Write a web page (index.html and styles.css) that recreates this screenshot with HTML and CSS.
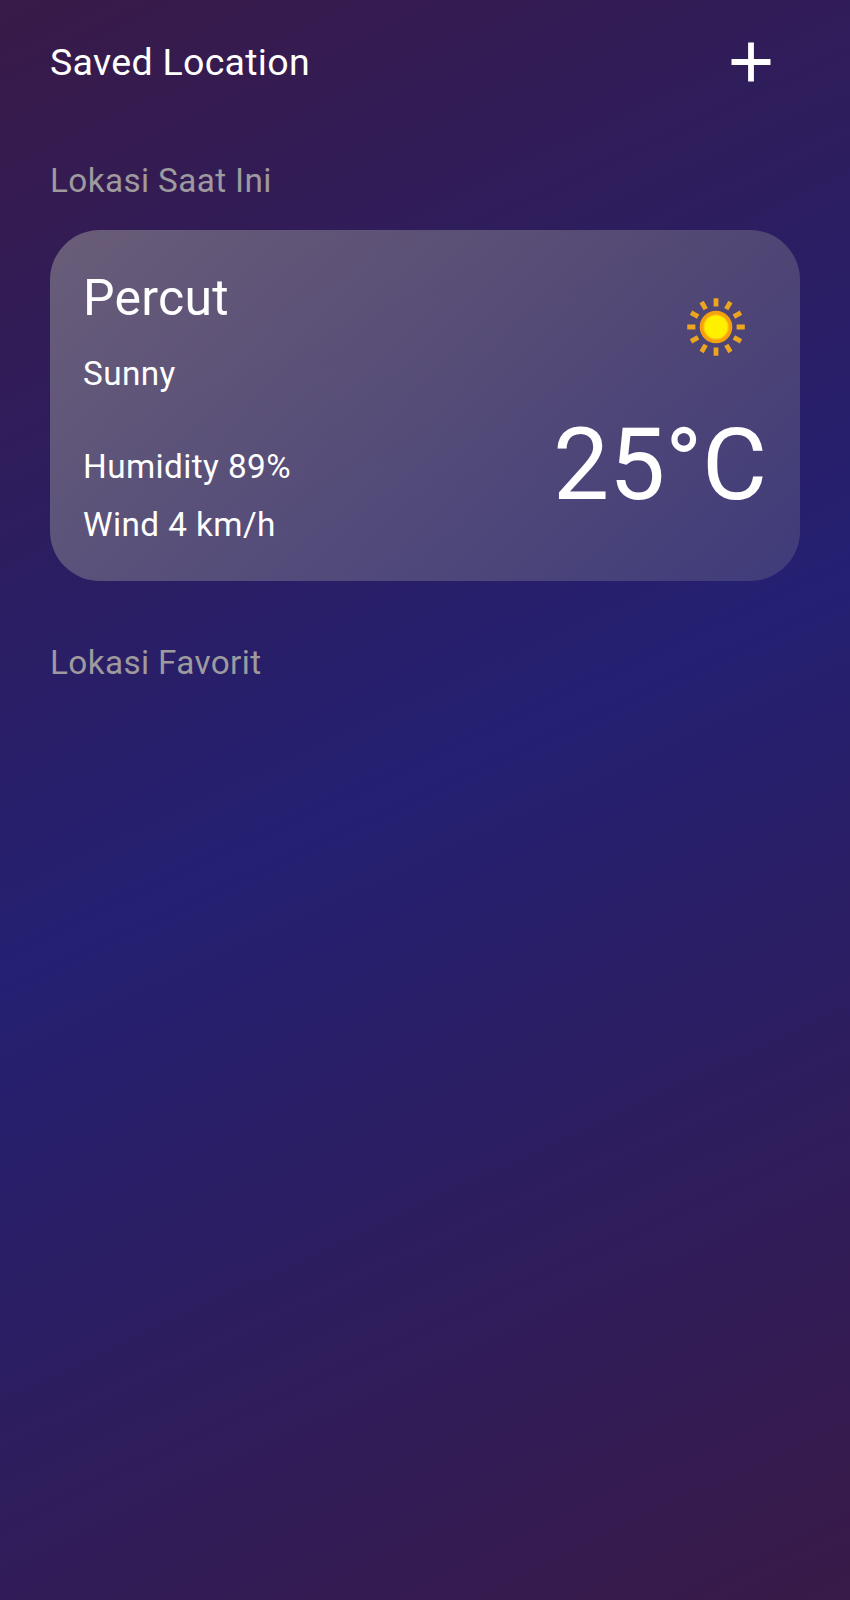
FILE: index.html
```html
<!DOCTYPE html>
<html lang="id">
<head>
<meta charset="utf-8">
<title>Saved Location</title>
<link rel="stylesheet" href="styles.css">
</head>
<body>
<main class="screen">
  <header class="header">
    <h1 class="title">Saved Location</h1>
    <svg class="add" viewBox="0 0 40 40" aria-label="Add"><path d="M20 .5V39.5M.5 20H39.5" stroke="#fff" stroke-width="5.8"/></svg>
  </header>
  <h2 class="section current">Lokasi Saat Ini</h2>
  <section class="card">
    <div class="details">
      <div class="city">Percut</div>
      <div class="condition">Sunny</div>
      <div class="humidity">Humidity 89%</div>
      <div class="wind">Wind 4 km/h</div>
    </div>
    <div class="weather">
      <svg class="sun" viewBox="-30 -30 60 60">
        <defs><g id="rays"><path d="M0-28.8V-20.6M0 20.6V28.8"/></g></defs>
        <g stroke="#eda41f" stroke-width="4.8">
          <use href="#rays"/><use href="#rays" transform="rotate(30)"/><use href="#rays" transform="rotate(60)"/>
          <use href="#rays" transform="rotate(90)"/><use href="#rays" transform="rotate(120)"/><use href="#rays" transform="rotate(150)"/>
        </g>
        <circle r="16.3" fill="#f5a10f"/><circle r="12.6" fill="#ffcf08"/><circle r="11.3" fill="#fff000"/>
      </svg>
      <div class="temperature">25°C</div>
    </div>
  </section>
  <h2 class="section favorites">Lokasi Favorit</h2>
</main>
</body>
</html>
```
FILE: styles.css
```css
body { margin: 0; font-family: Roboto, sans-serif; color: #fff; }
.screen { box-sizing: border-box; height: 1600px; padding: 37px 50px 0; background: linear-gradient(155deg, #391a48 0%, #242072 48.8%, #391a48 100%); }
.header { display: flex; justify-content: space-between; align-items: center; height: 50px; padding-right: 29px; }
.title { margin: 0; font-size: 37.5px; font-weight: 400; line-height: 50px; letter-spacing: .3px; }
.add { width: 40px; height: 40px; }
.section { margin: 0; font-size: 33.3px; font-weight: 400; line-height: 40px; letter-spacing: .37px; color: #9e9a9e; }
.current { margin-top: 74px; }
.card { box-sizing: border-box; display: flex; justify-content: space-between; height: 351px; margin-top: 29px; padding: 38px 33px 0 33px; border-radius: 50px; background: linear-gradient(135deg, rgba(158,158,158,.5), rgba(158,158,158,.22)); }
.city { font-size: 50px; line-height: 60px; letter-spacing: .25px; }
.condition, .humidity, .wind { font-size: 33.3px; line-height: 40px; letter-spacing: .42px; }
.condition { margin-top: 26px; }
.humidity { margin-top: 53px; }
.wind { margin-top: 18px; }
.weather { display: flex; flex-direction: column; align-items: flex-end; }
.sun { width: 60px; height: 60px; margin: 29px 21px 0 0; }
.temperature { margin-top: 48px; font-size: 100px; line-height: 120px; letter-spacing: -.2px; }
.favorites { margin-top: 62px; }
```
